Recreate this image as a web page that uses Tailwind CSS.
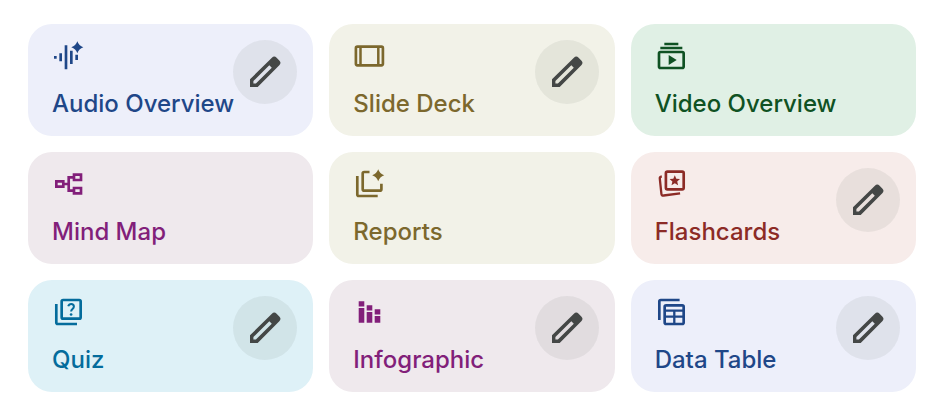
<!DOCTYPE html>
<html lang="en">
<head>
<meta charset="utf-8">
<title>Studio</title>
<script src="https://cdn.jsdelivr.net/npm/@tailwindcss/browser@4"></script>
</head>
<body class="bg-white font-['Inter',sans-serif]">
<svg class="hidden" aria-hidden="true">
  <symbol id="edit" viewBox="0 0 40 40"><path fill-rule="evenodd" d="M5 35v-7.700L26.900 5.800a3.300 3.300 0 0 1 4.700 0l2.700 2.700a3.300 3.300 0 0 1 0 4.700L12.700 35zM8.400 31.600h2.500L26.800 15.700l-2.500-2.500L8.400 29.100z"/></symbol>
</svg>
<main class="grid grid-cols-3 gap-4 pt-6 pr-5 pl-7 pb-5 text-2xl leading-8 font-medium">

  <div class="relative rounded-3xl bg-[#edeffa] text-[#1f4788]">
    <button type="button" class="flex w-full flex-col items-start gap-4 px-6 py-4 text-left">
      <svg class="size-8" viewBox="0 0 32 32" fill="currentColor" aria-hidden="true"><path d="M2 16h2.670v2.670H2zM7.330 13.330H10v8H7.330zM12.670 5.330h2.660v24h-2.660zM18 10.670h2.670v13.330H18zM23.330 14.670H26V20h-2.670zM25.330 1.330q1.500 4.500 6 6q-4.500 1.500-6 6q-1.500-4.500-6-6q4.500-1.500 6-6z"/></svg>
      <span class="whitespace-nowrap">Audio Overview</span>
    </button>
    <button type="button" aria-label="Customize Audio Overview" class="absolute top-4 right-4 flex size-16 items-center justify-center rounded-full bg-[#444746]/8 text-[#444746]"><svg class="size-10" fill="currentColor"><use href="#edit"/></svg></button>
  </div>

  <div class="relative rounded-3xl bg-[#f2f2e8] text-[#7c682d]">
    <button type="button" class="flex w-full flex-col items-start gap-4 px-6 py-4 text-left">
      <svg class="size-8" viewBox="0 0 32 32" fill="none" stroke="currentColor" stroke-width="2.670" aria-hidden="true"><rect x="2.900" y="6.670" width="27" height="18.670" rx="1.500"/><path d="M7.500 6v20M25.300 6v20" stroke-width="2.500"/></svg>
      <span>Slide Deck</span>
    </button>
    <button type="button" aria-label="Customize Slide Deck" class="absolute top-4 right-4 flex size-16 items-center justify-center rounded-full bg-[#444746]/8 text-[#444746]"><svg class="size-10" fill="currentColor"><use href="#edit"/></svg></button>
  </div>

  <div class="relative rounded-3xl bg-[#e0f0e5] text-[#0f5223]">
    <button type="button" class="flex w-full flex-col items-start gap-4 px-6 py-4 text-left">
      <svg class="size-8" viewBox="0 0 32 32" fill="none" stroke="currentColor" stroke-width="2.670" aria-hidden="true"><rect x="4" y="12" width="24.670" height="16" rx="1.500"/><path d="M5.330 8H27.330M9.330 4H23.330"/><path d="M13.700 15v10l8-5z" fill="currentColor" stroke="none"/></svg>
      <span>Video Overview</span>
    </button>
  </div>

  <div class="relative rounded-3xl bg-[#efe9ed] text-[#821f7a]">
    <button type="button" class="flex w-full flex-col items-start gap-4 px-6 py-4 text-left">
      <svg class="size-8" viewBox="0 0 32 32" fill="none" stroke="currentColor" stroke-width="2.670" aria-hidden="true"><path d="M4.330 13.330H11.300v5.330H4.330zM22 6.670h7V12h-7zM22 20h7v5.330h-7zM12 16h4.700M21.300 9.330h-4.600v13.340h4.600"/></svg>
      <span>Mind Map</span>
    </button>
  </div>

  <div class="relative rounded-3xl bg-[#f2f2e8] text-[#7c682d]">
    <button type="button" class="flex w-full flex-col items-start gap-4 px-6 py-4 text-left">
      <svg class="size-8" viewBox="0 0 32 32" fill="none" stroke="currentColor" stroke-width="2.670" aria-hidden="true"><path d="M4.300 8v18.500q0 1.500 1.500 1.500h18.900M16.500 4h-5.300q-1.500 0-1.500 1.500v15.700q0 1.500 1.500 1.500h15.700q1.500 0 1.500-1.500V15.700"/><path d="M25.200 1.330q1.500 4.500 6 6q-4.500 1.500-6 6q-1.500-4.500-6-6q4.500-1.500 6-6z" fill="currentColor" stroke="none"/></svg>
      <span>Reports</span>
    </button>
  </div>

  <div class="relative rounded-3xl bg-[#f7ecea] text-[#8c2b26]">
    <button type="button" class="flex w-full flex-col items-start gap-4 px-6 py-4 text-left">
      <svg class="size-8" viewBox="0 0 32 32" fill="none" stroke="currentColor" stroke-width="2.670" aria-hidden="true"><rect x="10.900" y="3.700" width="17.800" height="17.600" rx="1.500"/><path d="M6.800 8.300q-2.300.4-2 2.400l1.600 15.100q.2 2 2.200 1.700l16.500-2.200" stroke-width="2.300"/><path d="M19.800 7.300l1.500 3.500 3.700.3-2.800 2.500.9 3.700-3.300-2-3.300 2 .9-3.700-2.800-2.500 3.700-.3z" fill="currentColor" stroke="none"/></svg>
      <span>Flashcards</span>
    </button>
    <button type="button" aria-label="Customize Flashcards" class="absolute top-4 right-4 flex size-16 items-center justify-center rounded-full bg-[#444746]/8 text-[#444746]"><svg class="size-10" fill="currentColor"><use href="#edit"/></svg></button>
  </div>

  <div class="relative rounded-3xl bg-[#def1f7] text-[#046c9c]">
    <button type="button" class="flex w-full flex-col items-start gap-4 px-6 py-4 text-left">
      <svg class="size-8" viewBox="0 0 32 32" fill="none" stroke="currentColor" stroke-width="2.670" aria-hidden="true"><path d="M4.300 8v18.500q0 1.500 1.500 1.500H25"/><rect x="9.670" y="4" width="19" height="18.670" rx="1.500"/><path d="M16.200 10.300q.8-2.400 3-2.400 2.700 0 2.700 2.500 0 1.300-1.400 2.500-1.400 1.200-1.400 2.700" stroke-width="2"/><circle cx="19.100" cy="18.500" r="1.350" fill="currentColor" stroke="none"/></svg>
      <span>Quiz</span>
    </button>
    <button type="button" aria-label="Customize Quiz" class="absolute top-4 right-4 flex size-16 items-center justify-center rounded-full bg-[#444746]/8 text-[#444746]"><svg class="size-10" fill="currentColor"><use href="#edit"/></svg></button>
  </div>

  <div class="relative rounded-3xl bg-[#efe9ed] text-[#821f7a]">
    <button type="button" class="flex w-full flex-col items-start gap-4 px-6 py-4 text-left">
      <svg class="size-8" viewBox="0 0 32 32" fill="currentColor" aria-hidden="true"><path d="M5.700 5.300h5.600v5.300H5.700zM5.700 12h5.600v14.700H5.700zM13.700 9.300h5.600v5.300h-5.600zM13.700 16h5.600v10.700h-5.600zM21.700 13.300h5.600v5.300h-5.600zM21.700 20h5.600v6.700h-5.600z"/></svg>
      <span>Infographic</span>
    </button>
    <button type="button" aria-label="Customize Infographic" class="absolute top-4 right-4 flex size-16 items-center justify-center rounded-full bg-[#444746]/8 text-[#444746]"><svg class="size-10" fill="currentColor"><use href="#edit"/></svg></button>
  </div>

  <div class="relative rounded-3xl bg-[#edeffa] text-[#1f4788]">
    <button type="button" class="flex w-full flex-col items-start gap-4 px-6 py-4 text-left">
      <svg class="size-8" viewBox="0 0 32 32" fill="none" stroke="currentColor" stroke-width="2.670" aria-hidden="true"><path d="M4.330 24V5.500q0-1.500 1.500-1.500H24.600"/><rect x="9.670" y="9.330" width="19" height="18.670" rx="1.500"/><path d="M9.670 14.670h19M9.670 20.670h19M19.300 14.670V28" stroke-width="2.300"/></svg>
      <span>Data Table</span>
    </button>
    <button type="button" aria-label="Customize Data Table" class="absolute top-4 right-4 flex size-16 items-center justify-center rounded-full bg-[#444746]/8 text-[#444746]"><svg class="size-10" fill="currentColor"><use href="#edit"/></svg></button>
  </div>

</main>
</body>
</html>
